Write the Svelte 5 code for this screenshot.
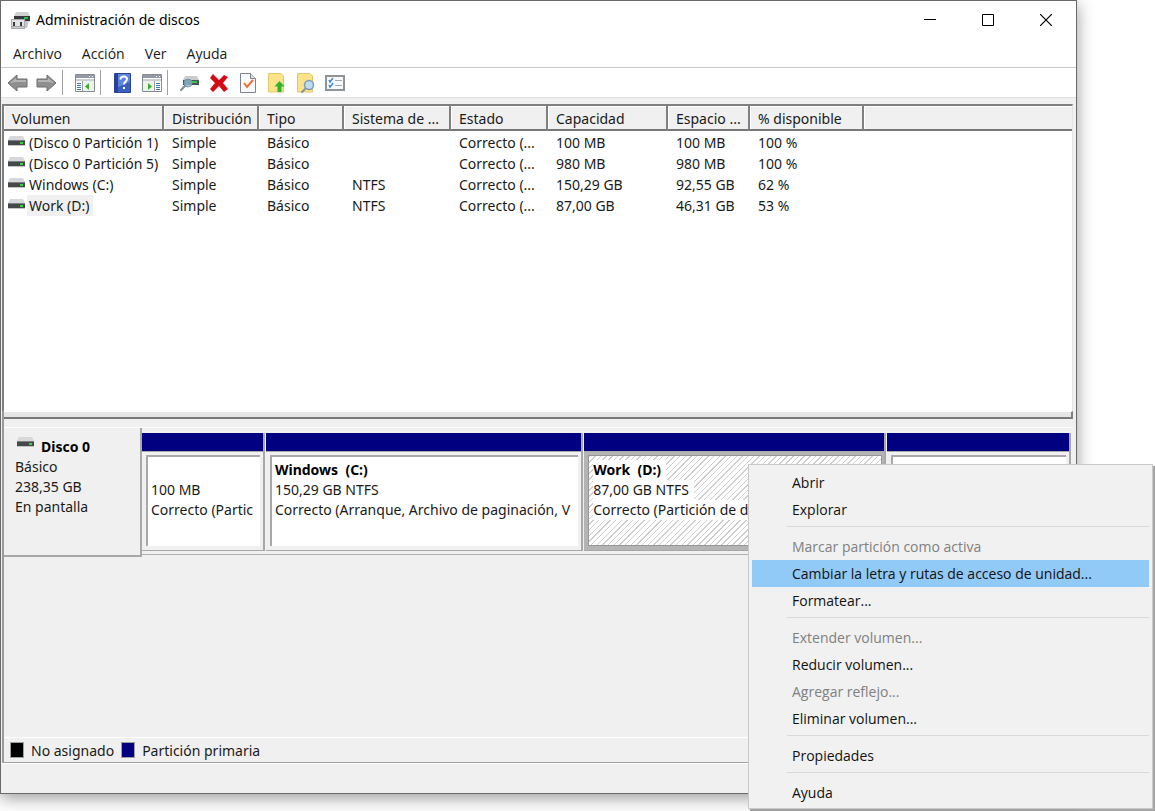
<script lang="ts">
  const menus = ['Archivo', 'Acción', 'Ver', 'Ayuda'];

  const columns = [
    { label: 'Volumen', width: 160 },
    { label: 'Distribución', width: 95 },
    { label: 'Tipo', width: 85 },
    { label: 'Sistema de ...', width: 107 },
    { label: 'Estado', width: 97 },
    { label: 'Capacidad', width: 120 },
    { label: 'Espacio ...', width: 82 },
    { label: '% disponible', width: 114 }
  ];

  const volumes = [
    { name: '(Disco 0 Partición 1)', cells: ['Simple', 'Básico', '', 'Correcto (...', '100 MB', '100 MB', '100 %'] },
    { name: '(Disco 0 Partición 5)', cells: ['Simple', 'Básico', '', 'Correcto (...', '980 MB', '980 MB', '100 %'] },
    { name: 'Windows (C:)', cells: ['Simple', 'Básico', 'NTFS', 'Correcto (...', '150,29 GB', '92,55 GB', '62 %'] },
    { name: 'Work (D:)', cells: ['Simple', 'Básico', 'NTFS', 'Correcto (...', '87,00 GB', '46,31 GB', '53 %'] }
  ];

  const partitions = [
    { name: '', size: '100 MB', status: 'Correcto (Partic', share: 122 },
    { name: 'Windows  (C:)', size: '150,29 GB NTFS', status: 'Correcto (Arranque, Archivo de paginación, V', share: 318 },
    { name: 'Work  (D:)', size: '87,00 GB NTFS', status: 'Correcto (Partición de d', share: 302 },
    { name: '', size: '', status: '', share: 184 }
  ];

  // null marks a separator
  const contextItems = [
    { label: 'Abrir' },
    { label: 'Explorar' },
    null,
    { label: 'Marcar partición como activa', disabled: true },
    { label: 'Cambiar la letra y rutas de acceso de unidad...' },
    { label: 'Formatear...' },
    null,
    { label: 'Extender volumen...', disabled: true },
    { label: 'Reducir volumen...' },
    { label: 'Agregar reflejo...', disabled: true },
    { label: 'Eliminar volumen...' },
    null,
    { label: 'Propiedades' },
    null,
    { label: 'Ayuda' }
  ];

  let selected = $state('Work (D:)');
  let highlighted = $state('Cambiar la letra y rutas de acceso de unidad...');

  function isSelected(name: string) {
    return name !== '' && name.replace('  ', ' ') === selected;
  }
</script>

{#snippet drive()}
  <svg class="drive" width="17" height="10" viewBox="0 0 17 10" aria-hidden="true">
    <path d="M2 0h13l2 4H0z" fill="#d6d8da" />
    <path d="M0 4h17v5H0z" fill="#45484b" />
    <path d="M0 4h17v1H0z" fill="#7c8082" />
    <path d="M0 9h17v1H0z" fill="#c4c4c4" />
    <path d="M12 6h3v2h-3z" fill="#35d535" />
  </svg>
{/snippet}

{#snippet panelIcon(flip: boolean)}
  <svg width="20" height="18" viewBox="0 0 20 18">
    <path d="M.5.5h19v17H.5z" fill="#fff" stroke="#858b93" />
    <path d="M1 1h18v3H1z" fill="#929aa5" />
    <path d="M1 5h18v2H1z" fill="#c9ced5" />
    <path d="M14 2h1v1h-1zm3 0h1v1h-1z" fill="#fff" />
    <g transform={flip ? 'matrix(-1 0 0 1 20 0)' : undefined}>
      <path d="M7.500 7v10" stroke="#9aa0a8" />
      <path d="M2 9.500h4M2 11.500h4M2 13.500h4M2 15.500h4" stroke="#3f78b8" />
      <path d="M8 7h11v10H8z" fill="#edf3ea" />
      <path d="M14 9v7l-4-3.500z" fill="#3fae2c" />
    </g>
  </svg>
{/snippet}

<div class="desktop">
  <main class="window">
    <header class="titlebar">
      <svg class="app-icon" width="20" height="19" viewBox="0 0 20 19" aria-hidden="true">
        <path d="M5 1h12l2 4H3z" fill="#cfd1d3" />
        <path d="M3 5h16v5H3z" fill="#36393b" />
        <path d="M13 6h4v2h-4z" fill="#22bd42" />
        <path d="M13 10h5l-2 7h-3z" fill="#c8c8c8" />
        <path d="M0 8h14v10H0z" fill="#a7aaac" />
        <path d="M1 9h12v6H1z" fill="#e2e3e4" />
        <path d="M2 11h2v4H2zm7 0h2v4H9z" fill="#3c3c3c" />
        <path d="M1 16h12v1H1z" fill="#ccc" />
      </svg>
      <h1>Administración de discos</h1>
      <div class="caption-buttons">
        <button aria-label="Minimizar">
          <svg width="12" height="12" viewBox="0 0 12 12"><path d="M0 5.500h12" stroke="#000" /></svg>
        </button>
        <button aria-label="Maximizar">
          <svg width="12" height="12" viewBox="0 0 12 12"><path d="M.5.5h11v11H.5z" fill="none" stroke="#000" /></svg>
        </button>
        <button aria-label="Cerrar">
          <svg width="12" height="12" viewBox="0 0 12 12"><path d="M0 0l12 12M12 0L0 12" stroke="#000" stroke-width="1.200" /></svg>
        </button>
      </div>
    </header>

    <nav class="menubar">
      {#each menus as menu}
        <button>{menu}</button>
      {/each}
    </nav>

    <div class="toolbar" role="toolbar" aria-label="Herramientas">
      <button aria-label="Atrás">
        <svg width="21" height="18" viewBox="0 0 21 18">
          <path d="M1 9l9-8v4h10v8H10v4z" fill="#8f8f8f" stroke="#6c6c6c" stroke-linejoin="round" />
          <path d="M3 9l6-5v2h10v2H9z" fill="#b4b4b4" />
        </svg>
      </button>
      <button aria-label="Adelante">
        <svg width="21" height="18" viewBox="0 0 21 18">
          <path d="M20 9l-9-8v4H1v8h10v4z" fill="#8f8f8f" stroke="#6c6c6c" stroke-linejoin="round" />
          <path d="M18 9l-6-5v2H2v2h10z" fill="#b4b4b4" />
        </svg>
      </button>
      <span class="divider"></span>
      <button class="wide" aria-label="Mostrar árbol de consola">{@render panelIcon(false)}</button>
      <span class="divider"></span>
      <button class="wide" aria-label="Ayuda">
        <svg width="17" height="20" viewBox="0 0 17 20">
          <path d="M.5.5h16v19H.5z" fill="#3c5fc4" stroke="#2a4396" />
          <path d="M1 1h3v18H1z" fill="#274399" />
          <path d="M4 1h12v8L4 14z" fill="#5d83dc" />
          <path d="M6.500 6.500c0-4 6.500-4 6.500-.5 0 2.500-3 2.500-3 5.500" fill="none" stroke="#fff" stroke-width="2" />
          <path d="M9 14h2v2H9z" fill="#fff" />
        </svg>
      </button>
      <button aria-label="Mostrar panel de acciones">{@render panelIcon(true)}</button>
      <span class="divider"></span>
      <button class="wide" aria-label="Conectar disco">
        <svg width="20" height="18" viewBox="0 0 20 18">
          <path d="M5 2h12l2 4H3z" fill="#c9cdd0" />
          <path d="M3 6h16v5H3z" fill="#4c5357" />
          <path d="M12 7h5v2h-5z" fill="#31c944" />
          <circle cx="8" cy="9" r="4" fill="#8fb9d4" fill-opacity=".8" stroke="#7894a6" />
          <path d="M5 12l-4 4" stroke="#7b8890" stroke-width="2" stroke-linecap="round" />
        </svg>
      </button>
      <button aria-label="Eliminar">
        <svg width="18" height="18" viewBox="0 0 18 18">
          <path d="M3 0l6 6 5-5 4 2-5 6 5 6-4 3-5-6-6 6-3-3 5-6-5-5z" fill="#d30b14" />
        </svg>
      </button>
      <button aria-label="Propiedades">
        <svg width="16" height="20" viewBox="0 0 16 20">
          <path d="M.5.5h10l5 5v14H.5z" fill="#f8f9fb" stroke="#80848a" />
          <path d="M10.500.5v5h5" fill="#dcdfe3" stroke="#80848a" />
          <path d="M4 10l3 4 6-7" fill="none" stroke="#f0702e" stroke-width="2" />
        </svg>
      </button>
      <button aria-label="Subir">
        <svg width="17" height="20" viewBox="0 0 17 20">
          <path d="M.5.5H13l2.500 2.500v16H.5z" fill="#fbe38a" stroke="#e5c768" />
          <path d="M11.500 8l5 5.500h-3V19h-4v-5.500h-3z" fill="#2cb52c" />
        </svg>
      </button>
      <button aria-label="Buscar">
        <svg width="18" height="20" viewBox="0 0 18 20">
          <path d="M.5.5H13l2.500 2.500v16H.5z" fill="#fbe38a" stroke="#e5c768" />
          <path d="M9 15l-4 4" stroke="#8a949c" stroke-width="2" stroke-linecap="round" />
          <circle cx="12" cy="12" r="4.500" fill="#bddcf0" stroke="#7c9db3" stroke-width="1.500" />
        </svg>
      </button>
      <button aria-label="Lista de opciones">
        <svg width="20" height="16" viewBox="0 0 20 16">
          <path d="M1 1h18v14H1z" fill="#f7f9fb" stroke="#8f9499" stroke-width="2" />
          <path d="M4 5l1 2 3-4M4 10l1 2 3-4" fill="none" stroke="#3b8bd0" stroke-width="1.500" />
          <path d="M10 5.500h7M10 10.500h7" stroke="#a3a8ae" />
        </svg>
      </button>
    </div>

    <section class="volume-list">
      <table>
        <colgroup>
          {#each columns as column}
            <col style="width: {column.width}px" />
          {/each}
          <col />
        </colgroup>
        <thead>
          <tr>
            {#each columns as column}
              <th scope="col">{column.label}</th>
            {/each}
            <td class="filler"></td>
          </tr>
        </thead>
        <tbody>
          {#each volumes as volume}
            <tr onclick={() => (selected = volume.name)}>
              <td class="name">
                <span class="name-row">
                  {@render drive()}
                  <span class="name-text" class:selected={volume.name === selected}>{volume.name}</span>
                </span>
              </td>
              {#each volume.cells as cell}
                <td>{cell}</td>
              {/each}
              <td></td>
            </tr>
          {/each}
        </tbody>
      </table>
    </section>

    <section class="graph">
      <div class="disk">
        <div class="disk-info">
          <h2>{@render drive()}Disco 0</h2>
          <p>Básico</p>
          <p>238,35 GB</p>
          <p>En pantalla</p>
        </div>
        <div class="partitions">
          {#each partitions as part}
            <div class="partition" class:active={isSelected(part.name)} style="flex-grow: {part.share}">
              <div class="stripe"></div>
              <div class="box">
                <p>{#if part.name}<b>{part.name}</b>{/if}</p>
                <p>{#if part.size}<span>{part.size}</span>{/if}</p>
                <p>{#if part.status}<span>{part.status}</span>{/if}</p>
              </div>
            </div>
          {/each}
        </div>
      </div>

      <div class="legend">
        <span class="swatch unallocated"></span>No asignado
        <span class="swatch primary"></span>Partición primaria
      </div>
    </section>

    <footer class="statusbar"></footer>
  </main>

  <div class="context-menu" role="menu">
    {#each contextItems as item}
      {#if item}
        <button
          role="menuitem"
          tabindex="-1"
          class:highlighted={item.label === highlighted}
          disabled={item.disabled}
          onmouseenter={() => (highlighted = item.label)}
        >{item.label}</button>
      {:else}
        <hr />
      {/if}
    {/each}
  </div>
</div>

<style>
  :global(body) {
    margin: 0;
    background: #fff;
  }

  .desktop {
    position: relative;
    display: flex;
    box-sizing: border-box;
    min-height: 100vh;
    padding: 0 78px 17px 0;
    overflow: hidden;
    font-family: "Noto Sans", "Open Sans", sans-serif;
    font-size: 14px;
    color: #1a1a1a;
  }

  button {
    border: 0;
    padding: 0;
    background: none;
    font: inherit;
    color: inherit;
  }

  h1, h2, p {
    margin: 0;
    font-size: inherit;
  }

  svg {
    display: block;
  }

  .window {
    display: flex;
    flex-direction: column;
    flex: 1;
    min-width: 0;
    box-sizing: border-box;
    border: 1px solid #6a6a6a;
    background: #f0f0f0;
    box-shadow: 0 4px 16px rgba(0, 0, 0, 0.4);
  }

  .titlebar {
    display: flex;
    align-items: center;
    height: 38px;
    padding: 0 1px 0 10px;
    background: #fff;
    color: #000;
  }

  .titlebar h1 {
    flex: 1;
    padding-left: 5px;
    font-weight: 400;
    line-height: 20px;
  }

  .caption-buttons {
    display: flex;
    height: 100%;
  }

  .caption-buttons button {
    display: grid;
    place-items: center;
    width: 58px;
  }

  .menubar {
    display: flex;
    gap: 20px;
    height: 28px;
    padding-left: 12px;
    border-bottom: 1px solid #c8c8c8;
    background: #fff;
    font-family: "Open Sans", "Noto Sans", sans-serif;
  }

  .toolbar {
    display: flex;
    align-items: center;
    height: 29px;
    padding-left: 2px;
    background: #fff;
    border-bottom: 1px solid #e0e0e0;
  }

  .toolbar button {
    display: grid;
    place-items: center;
    width: 29px;
    height: 28px;
  }

  .toolbar .wide {
    margin-left: 6px;
  }

  .divider {
    width: 1px;
    height: 25px;
    margin: 0 1px;
    background: #a0a0a0;
  }

  .volume-list {
    flex: 306 1 0;
    margin: 6px 3px 0 1px;
    border: solid #808080;
    border-width: 2px 0 0 2px;
    border-right: 1px solid #e3e3e3;
    background: #fff;
  }

  table {
    width: 100%;
    table-layout: fixed;
    border-collapse: separate;
    border-spacing: 0;
  }

  th, td {
    height: 21px;
    padding: 0 0 0 8px;
    line-height: 21px;
    text-align: left;
    font-weight: 400;
    white-space: nowrap;
  }

  th, .filler {
    box-sizing: border-box;
    height: 25px;
    padding-top: 3px;
    border-bottom: 2px solid #787878;
    background: #f0f0f0;
    box-shadow: inset 1px 1px #fff;
    line-height: 20px;
  }

  th {
    border-right: 2px solid #808080;
  }

  tbody tr:first-child td {
    padding-top: 1px;
  }

  td.name {
    padding-left: 4px;
  }

  .name-row {
    display: flex;
    gap: 2px;
  }

  .name-row .drive {
    margin-top: 4px;
  }

  .name-text {
    padding: 0 4px 0 2px;
  }

  .name-text.selected {
    background: #f0f0f0;
  }

  .drive {
    flex: none;
  }

  .graph {
    display: flex;
    flex-direction: column;
    flex: 352 1 0;
    margin: 0 3px 0 1px;
    border-left: 2px solid #9a9a9a;
    border-bottom: 1px solid #a0a0a0;
  }

  /* splitter between the list and the disk view */
  .graph::before {
    content: "";
    height: 5px;
    margin-bottom: 8px;
    border-top: 1px solid #fff;
    border-right: 2px solid #808080;
    border-bottom: 2px solid #787878;
    background: #e6e6e6;
  }

  .disk {
    display: flex;
    border-top: 1px solid #fff;
  }

  .disk-info {
    flex: none;
    box-sizing: border-box;
    width: 138px;
    padding: 9px 11px 38px;
    border-right: 2px solid #a8a8a8;
    border-bottom: 2px solid #a8a8a8;
    line-height: 20px;
  }

  .disk-info h2 {
    display: flex;
    gap: 7px;
    padding-left: 2px;
    font-weight: 700;
    color: #000;
  }

  .partitions {
    display: flex;
    flex: 1;
    gap: 1px;
    min-width: 0;
    margin-bottom: 2px;
    padding: 5px 2px 3px 0;
    border-bottom: 1px solid #b0b0b0;
  }

  .partition {
    display: flex;
    flex-direction: column;
    flex-basis: 0;
    box-sizing: border-box;
    min-width: 0;
    border-right: 2px solid #a8a8a8;
    border-bottom: 1px solid #a8a8a8;
  }

  .stripe {
    height: 18px;
    border-bottom: 1px solid #a8a8a8;
    background: #000080;
  }

  .box {
    flex: 1;
    margin: 3px 3px 4px 4px;
    padding: 3px 0 0 3px;
    border: solid #a8a8a8;
    border-width: 2px 0 0 2px;
    background: #fff;
  }

  .active {
    background: #b4b4b4;
  }

  .active .box {
    margin: 3px 2px 4px 4px;
    border: 1px solid #969696;
    padding: 4px 0 0 4px;
    background: repeating-linear-gradient(135deg, #cecece 0 1px, #fff 1px 4px);
  }

  .box p {
    height: 20px;
    line-height: 20px;
    white-space: pre;
  }

  .box b, .box span {
    display: inline-block;
    background: #fff;
  }

  .active b, .active span {
    padding-right: 5px;
  }

  .box b {
    color: #000;
  }

  .legend {
    display: flex;
    align-items: center;
    gap: 7px;
    height: 24px;
    margin-top: auto;
    padding-left: 6px;
    border-top: 1px solid #fff;
  }

  .swatch {
    box-sizing: border-box;
    width: 14px;
    height: 16px;
    border: 1px solid #a0a0a0;
  }

  .unallocated { background: #000; }
  .primary { background: #000080; }

  .statusbar {
    height: 29px;
    border-top: 1px solid #fff;
  }

  .context-menu {
    position: absolute;
    right: 2px;
    bottom: 2px;
    display: flex;
    flex-direction: column;
    box-sizing: border-box;
    width: 405px;
    padding: 4px 3px 2px;
    border: 1px solid #cacaca;
    background: #f1f1f1;
    box-shadow: 2px 2px 1px rgba(0, 0, 0, 0.35);
    font-family: "Open Sans", "Noto Sans", sans-serif;
  }

  .context-menu button {
    height: 27px;
    padding-left: 40px;
    text-align: left;
    color: #111;
  }

  .context-menu button:disabled {
    color: #808080;
  }

  .context-menu .highlighted {
    background: #91c9f7;
  }

  .context-menu hr {
    height: 1px;
    margin: 3px 0 6px 35px;
    border: 0;
    background: #d9d9d9;
  }
</style>
